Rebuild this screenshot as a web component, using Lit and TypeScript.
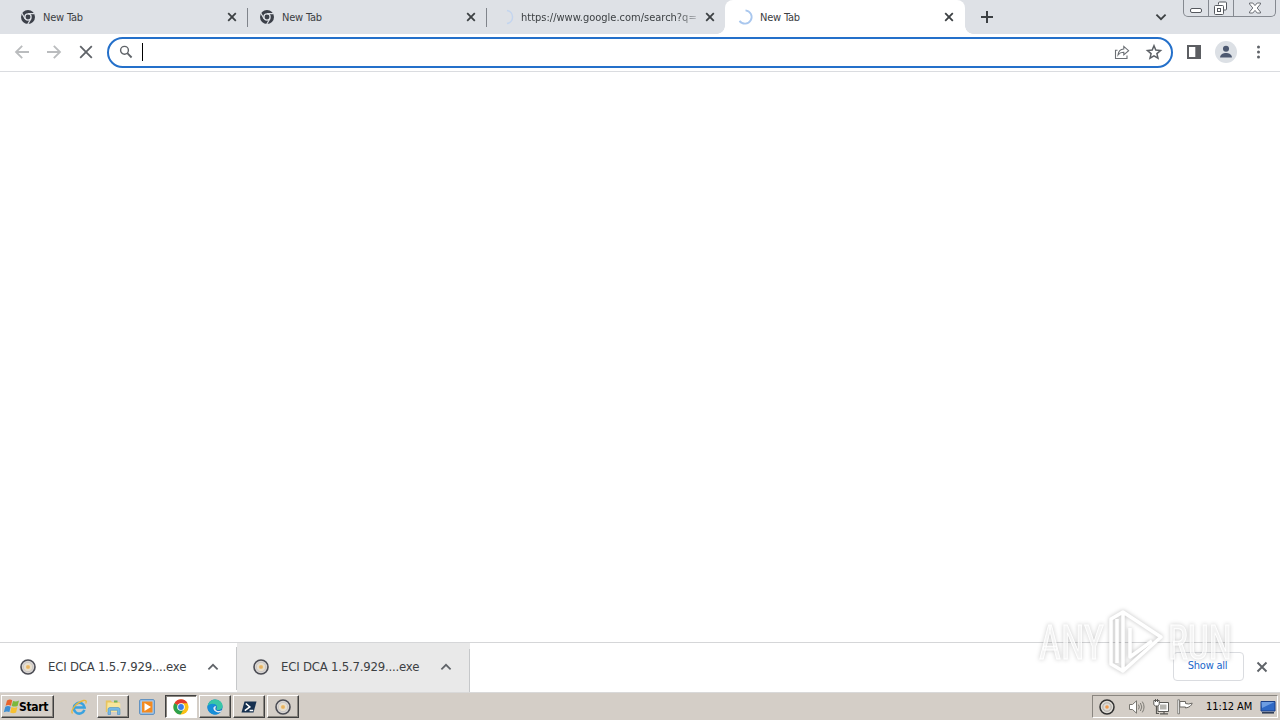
import { LitElement, html, css, svg, nothing, TemplateResult } from 'lit';
import { customElement, property } from 'lit/decorators.js';
import { classMap } from 'lit/directives/class-map.js';

const chromeMono = svg`
  <circle cx="8" cy="8" r="7" fill="#3c4049"/>
  <circle cx="8" cy="8" r="3.1" fill="#3c4049" stroke="#dee1e6" stroke-width="1.3"/>
  <path d="M8 4.6h6.5M5.1 9.7L1.9 4.2M10.9 9.7L7.7 15.2" stroke="#dee1e6" stroke-width="1.2"/>`;

const disc = svg`
  <circle cx="8" cy="8" r="7" fill="#d9d6d4" stroke="#4b4c54" stroke-width="1.6"/>
  <circle cx="8" cy="8" r="4.7" fill="#e7dfcf" stroke="#c4c0c2" stroke-width=".8"/>
  <circle cx="8" cy="8" r="2.1" fill="#eebb68"/>
  <circle cx="8" cy="8" r=".6" fill="#c9985c"/>`;

const trayDisc = svg`
  <circle cx="8" cy="8" r="7" fill="#dedbd5" stroke="#303030" stroke-width="1.5"/>
  <circle cx="8" cy="8" r="4.2" fill="none" stroke="#a3a09c" stroke-width=".8"/>
  <circle cx="8" cy="8" r="1.8" fill="#f09a4d"/>`;

const icons: Record<string, TemplateResult> = {
  chromeMono,
  disc,
  trayDisc,
  spinner: svg`<path d="M8.5 1.3a6.7 6.7 0 1 1-6 10.6" fill="none" stroke="#a9c7ee" stroke-width="1.8"/>`,
  spinnerFaint: svg`<path d="M9 1.4a6.7 6.7 0 0 1 0 13.2" fill="none" stroke="#c3d5ef" stroke-width="1.5"/>`,
  close: svg`<path d="M4.2 4.2l7.6 7.6M11.8 4.2l-7.6 7.6" stroke="#3c4043" stroke-width="1.8"/>`,
  closeLarge: svg`<path d="M3.5 3.5l9 9M12.5 3.5l-9 9" stroke="#5f6368" stroke-width="1.9"/>`,
  plus: svg`<path d="M8 2v12M2 8h12" stroke="#3c4043" stroke-width="2"/>`,
  chevronDown: svg`<path d="M3.4 5.6L8 10.2l4.6-4.6" fill="none" stroke="#3c4043" stroke-width="1.8"/>`,
  chevronUp: svg`<path d="M3.400 10.400L8 5.800l4.600 4.600" fill="none" stroke="#5f6368" stroke-width="1.700"/>`,
  back: svg`<path d="M15 8H2M8.2 1.8L2 8l6.2 6.2" fill="none" stroke="#babcbe" stroke-width="1.8"/>`,
  forward: svg`<path d="M1 8h13M7.8 1.8L14 8l-6.2 6.2" fill="none" stroke="#babcbe" stroke-width="1.8"/>`,
  stop: svg`<path d="M2.2 2.2l11.6 11.600M13.800 2.200L2.200 13.800" stroke="#5f6368" stroke-width="1.800"/>`,
  search: svg`<circle cx="6.500" cy="6.300" r="3.900" fill="none" stroke="#5f6368" stroke-width="1.400"/><path d="M9.300 9.200l4.300 4.300" stroke="#5f6368" stroke-width="1.800"/>`,
  share: svg`<path d="M3.500 6.200h-2v8.300h11.500v-3" fill="none" stroke="#6b6f74" stroke-width="1.100"/><path d="M4 11C4.400 7.400 6.300 5.300 9.800 5V2.400l4.800 4.300-4.800 4.200V8.300C7.200 8.200 5.500 9 4 11z" fill="none" stroke="#6b6f74" stroke-width="1.100"/>`,
  star: svg`<path d="M8 1.800l1.800 4.300 4.700.4-3.600 3.100 1.100 4.600L8 11.800l-4 2.400 1.100-4.600-3.600-3.100 4.700-.4z" fill="none" stroke="#5c6065" stroke-width="1.500"/>`,
  panel: svg`<rect x="2" y="2" width="12" height="12" fill="none" stroke="#5c5e62" stroke-width="2"/><path d="M9.300 2h4.700v12H9.300z" fill="#5c5e62"/>`,
  avatar: svg`<circle cx="8" cy="8" r="8" fill="#dce0e5"/><circle cx="8" cy="5.700" r="2.200" fill="#4c5870"/><path d="M3.700 12c0-2.200 2.400-3.200 4.300-3.200s4.300 1 4.300 3.200z" fill="#4c5870"/>`,
  menu: svg`<g fill="#5f6368"><circle cx="8.500" cy="2.900" r="1.500"/><circle cx="8.500" cy="8" r="1.500"/><circle cx="8.500" cy="13.100" r="1.500"/></g>`,
  minimize: svg`<rect x="2.500" y="8.500" width="11" height="4" rx="1.500" fill="#fff" stroke="#55585e"/>`,
  restore: svg`<path d="M5.500 4.500v-1.500q0-1 1-1h6q1 0 1 1v6q0 1-1 1h-2" fill="#fff" stroke="#55585e"/><rect x="1.500" y="5.500" width="9" height="9" rx="1" fill="#fff" stroke="#55585e"/><rect x="4.500" y="8.500" width="3" height="3" fill="none" stroke="#55585e"/>`,
  winClose: svg`<path d="M2.500 3h3.300L8 5.600 10.200 3h3.300v1L10.200 8l3.300 4v1h-3.300L8 10.400 5.800 13H2.500v-1l3.300-4-3.300-4z" fill="#fff" stroke="#6b6e74"/>`,
  windows: svg`
    <path d="M4 1.500q3-1.800 5.200-.2L8 6.700Q5.200 5.500 2.600 6.700z" fill="#e8642c"/>
    <path d="M10 1.900q3 1.200 6-.5L14.600 6.900q-3 1.400-5.900 0z" fill="#7cb83c"/>
    <path d="M2.300 7.700Q5 6.500 7.700 7.700l-1.300 5.300Q3.800 11.800 .8 13.200z" fill="#3e8fd3"/>
    <path d="M8.500 8q3 1.400 5.900 0l-1.300 5.500q-2.900 1.500-5.900 0z" fill="#f6c032"/>`,
  ie: svg`
    <path d="M13.400 10.800A5.400 5.400 0 1 1 13.600 8.500H4" fill="none" stroke="#39a2df" stroke-width="2.500"/>
    <path d="M1.500 14.500C-.8 12 4.600 3.600 12.500 1.500c3-.6 3.200 1.200 2.200 3" fill="none" stroke="#eab83c" stroke-width="1.300"/>`,
  folder: svg`
    <path d="M.8 3V1.500h5L7 3h7.500v10H.8z" fill="#e8c45f"/>
    <path d="M2.500 3.600h11.800l1 1.300v8H2z" fill="#f8e69b"/>
    <path d="M9 1.500h3.500v2H9z" fill="#70b25b"/>
    <path d="M3 15.500V10.500q0-2 2-2h8q2 0 2 2v5h-2.500V11.300h-7v4.200z" fill="#75b9e4" stroke="#4c8fc3" stroke-width=".6"/>`,
  player: svg`
    <rect x=".7" y=".7" width="14.600" height="14.600" rx="1" fill="#a9cbed" stroke="#4c85bd"/>
    <rect x="3" y="2.500" width="10.500" height="11" fill="#f38a20"/>
    <path d="M5.500 4v8L12 8z" fill="#fff"/>`,
  chrome: svg`
    <circle cx="8" cy="8" r="7.600" fill="#fbc116"/>
    <path d="M8 8L1.400 4.200A7.600 7.600 0 0 1 14.600 4.200H8z" fill="#e33b2e"/>
    <path d="M8 8L1.400 4.200A7.600 7.600 0 0 0 7.500 15.600L11 9.800z" fill="#2da14c"/>
    <circle cx="8" cy="8" r="3.800" fill="#fff"/><circle cx="8" cy="8" r="2.900" fill="#3a7de8"/>`,
  edge: svg`
    <circle cx="8" cy="8" r="7.600" fill="#1674c8"/>
    <path d="M.5 7.500C1.200 3 4.300.4 8.200.4c4.300 0 7.400 3 7.400 6.600 0 2.600-2 4-4.100 4-1.800 0-2.800-.8-1.600-2.300C10.800 5.500 5 2.800.5 7.500z" fill="#39c6a7"/>
    <path d="M.5 7.500C3 3.600 8.300 4.400 9.700 7 6.800 6 5 8.500 6.300 11c1.200 2.300 4.200 3.200 7.200 2.200-4.600 5-13.400 1.500-13-5.700z" fill="#168fd9"/>
    <path d="M9.300 7.500c-1.700 1.700-1 4.600 2.200 4.600 1.400 0 2.700-.6 3.500-1.300l-1.300 2.300c-3 1-6-.2-7.100-2.500-.9-2 .5-4 2.700-3.100z" fill="#e0edf5"/>`,
  powershell: svg`
    <path d="M3.500 2.500H15.500L12.500 13.500H.5z" fill="#16304f"/>
    <path d="M4.800 4.500L8.800 8l-5 3.600M8.600 11.500h3.600" fill="none" stroke="#fff" stroke-width="1.600"/>`,
  speaker: svg`
    <path d="M.5 5.500h3L7.500 1.800v12.400L3.500 10.500h-3z" fill="#fff" stroke="#77756f"/>
    <path d="M9.500 5.600q1.600 2.400 0 4.800M11.400 4q2.800 4 0 8M13.300 2.600q3.500 5.400 0 10.800" fill="none" stroke="#7c7a74"/>`,
  network: svg`
    <path d="M5 3.500h10.500v9H5z" fill="#fff" stroke="#5a5955"/><path d="M7 5.500h6.500v5H7z" fill="#b6b5b0"/>
    <path d="M7 14.800h8M11 12.500V15M3.500 7v7.500H6" fill="none" stroke="#5a5955" stroke-width="1.200"/>
    <path d="M.8 1.500h5.400v4.200L4.500 7h-2L.8 5.700z" fill="#fff" stroke="#5a5955"/><path d="M2.500 0v3M4.500 0v3" stroke="#5a5955"/>`,
  flag: svg`
    <path d="M.8.8h1.700v14H.8z" fill="#fff" stroke="#6b6964" stroke-width=".8"/>
    <path d="M2.800 2.500h5.700v2q3 1.200 6.700-.4-1 4-6.700 4.900V8H2.800z" fill="#fff" stroke="#6b6964"/>`,
  desktop: svg`
    <path d="M1 2.500h14v9.500H1z" fill="#2f69c5" stroke="#1b3f86"/>
    <path d="M1.500 3h13L2 9z" fill="#6d9de2"/><path d="M2 13.800h12" stroke="#263653" stroke-width="1.500"/>`,
};

@customElement('ui-icon')
export class UiIcon extends LitElement {
  @property() name = '';

  static styles = css`
    :host {
      display: block;
      flex: none;
      width: 16px;
      height: 16px;
    }

    svg {
      display: block;
      width: 100%;
      height: 100%;
      overflow: visible;
    }
  `;

  render() {
    return html`<svg viewBox="0 0 16 16">${icons[this.name] ?? nothing}</svg>`;
  }
}

interface Tab {
  title: string;
  icon: string;
  active?: boolean;
  long?: boolean;
}

const tabs: Tab[] = [
  { title: 'New Tab', icon: 'chromeMono' },
  { title: 'New Tab', icon: 'chromeMono' },
  { title: 'https://www.google.com/search?q=', icon: 'spinnerFaint', long: true },
  { title: 'New Tab', icon: 'spinner', active: true },
];

const taskButtons = [
  { icon: 'ie', kind: 'flat' },
  { icon: 'folder', kind: 'raised' },
  { icon: 'player', kind: 'flat' },
  { icon: 'chrome', kind: 'pressed' },
  { icon: 'edge', kind: 'raised' },
  { icon: 'powershell', kind: 'raised' },
  { icon: 'disc', kind: 'raised' },
];

@customElement('app-root')
export class AppRoot extends LitElement {
  static styles = css`
    :host {
      display: flex;
      flex-direction: column;
      position: relative;
      width: 1280px;
      height: 720px;
      overflow: hidden;
      background: #fff;
      color: #3c4043;
      font-family: 'DejaVu Sans Condensed', 'DejaVu Sans', sans-serif;
      font-stretch: condensed;
      font-size: 11px;
      white-space: nowrap;
    }

    * {
      box-sizing: border-box;
    }

    .tabstrip {
      display: flex;
      flex: none;
      height: 34px;
      padding-left: 9px;
      background: #dee1e6;
    }

    .tab {
      position: relative;
      display: flex;
      align-items: center;
      width: 239px;
      padding: 0 8px 0 11px;
    }

    .tab.active {
      width: 240px;
      margin-left: -1px;
      padding-left: 12px;
      background: #fff;
      border-radius: 8px 8px 0 0;
    }

    .tab.active::before,
    .tab.active::after {
      content: '';
      position: absolute;
      bottom: 0;
      width: 8px;
      height: 8px;
    }

    .tab.active::before {
      left: -8px;
      background: radial-gradient(circle at 0 0, transparent 7.5px, #fff 8px);
    }

    .tab.active::after {
      right: -8px;
      background: radial-gradient(circle at 100% 0, transparent 7.5px, #fff 8px);
    }

    .tab.divided::after {
      content: '';
      position: absolute;
      right: 0;
      top: 8px;
      width: 1px;
      height: 19px;
      background: #80848b;
    }

    .title {
      flex: 1;
      overflow: hidden;
      margin-left: 7px;
      letter-spacing: -0.2px;
    }

    .title.long {
      flex: none;
      width: 175px;
      margin-right: 6px;
      letter-spacing: 0;
      mask-image: linear-gradient(90deg, #000 155px, transparent 182px);
    }

    .new-tab {
      margin: 9px 0 0 14px;
    }

    .strip-end {
      display: flex;
      margin-left: auto;
    }

    .strip-end > ui-icon {
      margin: 9px 14px 0 0;
    }

    .window-controls {
      display: flex;
      width: 93px;
      height: 17px;
      margin-right: 4px;
      border: 1px solid #858990;
      border-top: 0;
      border-radius: 0 0 5px 5px;
    }

    .window-controls span {
      display: flex;
      justify-content: center;
      width: 25px;
      border-right: 1px solid #858990;
    }

    .window-controls span:last-child {
      width: 41px;
      border: 0;
    }

    .toolbar {
      display: flex;
      flex: none;
      align-items: center;
      height: 38px;
      padding: 0 14px;
      border-bottom: 1px solid #dadce0;
    }

    .nav {
      display: flex;
      gap: 16px;
      width: 93px;
      padding-bottom: 1px;
    }

    .omnibox {
      display: flex;
      align-items: center;
      width: 1066px;
      height: 31px;
      padding: 0 10px 1px 9px;
      border: 2px solid #2470ca;
      border-radius: 16px;
    }

    .caret {
      width: 1px;
      height: 18px;
      margin-left: 8px;
      background: #000;
    }

    .omnibox .share {
      margin-left: auto;
      margin-right: 16px;
    }

    .omnibox .star {
      margin-right: -1px;
    }

    .toolbar-end {
      display: flex;
      align-items: center;
      margin-left: 13px;
      padding-bottom: 2px;
    }

    .avatar {
      width: 22px;
      height: 22px;
      margin: 0 13px;
    }

    .page {
      flex: 1;
    }

    .downloads {
      display: flex;
      flex: none;
      align-items: center;
      height: 51px;
      padding: 0 10px 2px 0;
      border-top: 1px solid #d5d6d8;
      border-bottom: 1px solid #d9d9d9;
    }

    .download {
      display: flex;
      align-items: center;
      width: 237px;
      height: 47px;
      padding: 0 16px 0 20px;
      background: linear-gradient(#c6c8ca, #c6c8ca) right bottom / 1px 43px no-repeat;
      font-size: 13px;
    }

    .download.hover {
      width: 233px;
      height: 49px;
      margin-bottom: -2px;
      padding: 0 16px 2px;
      background-color: #e9e9e9;
    }

    .download .name {
      flex: 1;
      margin-left: 12px;
      letter-spacing: -0.2px;
    }

    .show-all {
      width: 71px;
      height: 29px;
      margin: 0 10px 0 auto;
      padding: 0 2px 2px 0;
      border: 1px solid #dadce0;
      border-radius: 4px;
      background: #fff;
      color: #2068ca;
      font: inherit;
      letter-spacing: -0.25px;
    }

    .taskbar {
      display: flex;
      flex: none;
      align-items: center;
      height: 27px;
      padding: 0 2px 0 1px;
      background: #d4cec7;
      color: #000;
    }

    .start,
    .task {
      display: flex;
      align-items: center;
      height: 23px;
    }

    .start,
    .task.raised {
      border: 1px solid;
      border-color: #fff #404040 #404040 #fff;
      box-shadow: inset -1px -1px #8a8680;
    }

    .start {
      width: 53px;
      margin-right: 7px;
      padding-left: 1px;
      font: bold 12px 'DejaVu Sans Condensed', 'DejaVu Sans', sans-serif;
      letter-spacing: -0.35px;
    }

    .task {
      justify-content: center;
      width: 32px;
      margin-left: 2px;
    }

    .task.pressed {
      border: 1px solid;
      border-color: #404040 #fff #fff #404040;
      box-shadow: inset 1px 1px #8a8680;
      background: #fff;
    }

    .tray {
      display: flex;
      align-items: center;
      width: 186px;
      height: 23px;
      margin-left: auto;
      padding-left: 6px;
      border: 1px solid;
      border-color: #8a8680 #fff #fff #8a8680;
    }

    .tray ui-icon + ui-icon {
      margin-left: 8px;
    }

    .tray .speaker {
      margin-left: 14px !important;
    }

    .clock {
      width: 48px;
      margin: 0 6px 0 13px;
      letter-spacing: -0.1px;
    }

    .watermark {
      position: absolute;
      left: 1036px;
      top: 606px;
      width: 200px;
      height: 70px;
      filter: drop-shadow(0 0 2px rgba(0, 0, 0, 0.25));
      pointer-events: none;
    }
  `;

  render() {
    return html`
      <div class="tabstrip">
        ${tabs.map((tab, i) => this.renderTab(tab, i))}
        <ui-icon class="new-tab" name="plus"></ui-icon>
        <div class="strip-end">
          <ui-icon name="chevronDown"></ui-icon>
          <div class="window-controls">
            <span><ui-icon name="minimize"></ui-icon></span>
            <span><ui-icon name="restore"></ui-icon></span>
            <span><ui-icon name="winClose"></ui-icon></span>
          </div>
        </div>
      </div>
      <div class="toolbar">
        <div class="nav">
          <ui-icon name="back"></ui-icon>
          <ui-icon name="forward"></ui-icon>
          <ui-icon name="stop"></ui-icon>
        </div>
        <div class="omnibox">
          <ui-icon name="search"></ui-icon>
          <div class="caret"></div>
          <ui-icon class="share" name="share"></ui-icon>
          <ui-icon class="star" name="star"></ui-icon>
        </div>
        <div class="toolbar-end">
          <ui-icon name="panel"></ui-icon>
          <ui-icon class="avatar" name="avatar"></ui-icon>
          <ui-icon name="menu"></ui-icon>
        </div>
      </div>
      <div class="page"></div>
      <div class="downloads">
        ${[false, true].map((hover) => this.renderDownload(hover))}
        <button class="show-all">Show all</button>
        <ui-icon name="closeLarge"></ui-icon>
      </div>
      <div class="taskbar">
        <div class="start"><ui-icon name="windows"></ui-icon>Start</div>
        ${taskButtons.map(
          (b) => html`<div class="task ${b.kind}"><ui-icon name=${b.icon}></ui-icon></div>`
        )}
        <div class="tray">
          <ui-icon name="trayDisc"></ui-icon>
          <ui-icon class="speaker" name="speaker"></ui-icon>
          <ui-icon name="network"></ui-icon>
          <ui-icon name="flag"></ui-icon>
          <span class="clock">11:12 AM</span>
          <ui-icon name="desktop"></ui-icon>
        </div>
      </div>
      ${this.renderWatermark()}
    `;
  }

  private renderTab(tab: Tab, index: number) {
    return html`
      <div class=${classMap({ tab: true, active: !!tab.active, divided: index < 2 })}>
        <ui-icon name=${tab.icon}></ui-icon>
        <span class=${classMap({ title: true, long: !!tab.long })}>${tab.title}</span>
        <ui-icon name="close"></ui-icon>
      </div>
    `;
  }

  private renderDownload(hover: boolean) {
    return html`
      <div class=${classMap({ download: true, hover })}>
        <ui-icon name="disc"></ui-icon>
        <span class="name">ECI DCA 1.5.7.929....exe</span>
        <ui-icon name="chevronUp"></ui-icon>
      </div>
    `;
  }

  private renderWatermark() {
    return html`
      <svg class="watermark" viewBox="0 0 200 70">
        <g
          font-family="Roboto, sans-serif"
          font-size="49"
          fill="#fff"
          fill-opacity=".65"
          stroke="#fff"
          stroke-width="1"
        >
          <text x="3" y="53" textLength="65" lengthAdjust="spacingAndGlyphs">ANY</text>
          <text x="132" y="53" textLength="64" lengthAdjust="spacingAndGlyphs">RUN</text>
        </g>
        <g fill="none" stroke="#fff" stroke-width="3.5" stroke-linejoin="round">
          <path d="M87 6l38 25-38 34z" />
          <path d="M87 6l-12 7v45l12 7M81 13v44M94 22v29l22-16" />
        </g>
      </svg>
    `;
  }
}

declare global {
  interface HTMLElementTagNameMap {
    'app-root': AppRoot;
    'ui-icon': UiIcon;
  }
}
